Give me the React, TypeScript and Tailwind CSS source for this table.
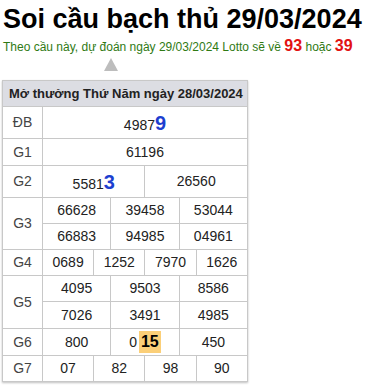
import React from "react";

const cell = "border border-[#c8c8c8] text-center text-[14px] text-[#222]";
const label = "border border-[#c8c8c8] text-center text-[14px] text-[#444]";

function Big({ children }: { children: React.ReactNode }) {
  return <span className="text-[20px] font-bold text-[#1d3fd0]">{children}</span>;
}

export default function App() {
  return (
    <div className="w-[370px] h-[387px] bg-white font-['Liberation_Sans',Arial,sans-serif]">
      <h1 className="pl-[3px] pt-[3px] text-[27px] leading-[32px] font-bold text-black">
        Soi cầu bạch thủ 29/03/2024
      </h1>
      <p className="pl-[3px] mt-[3px] text-[12px] leading-[16px] text-[#2f7a14]">
        Theo cầu này, dự đoán ngày 29/03/2024 Lotto sẽ về{" "}
        <span className="text-[16px] font-bold text-[#e21212]">93</span> hoặc{" "}
        <span className="text-[16px] font-bold text-[#e21212]">39</span>
      </p>
      <div className="pl-[104px] pt-[3px] h-[25px]">
        <svg width="14" height="13" viewBox="0 0 14 13">
          <polygon points="7,0 14,13 0,13" fill="#bdbdbd" />
        </svg>
      </div>
      <div className="ml-[2px] w-[246px] shadow-[0_1px_2px_rgba(0,0,0,0.25)]">
        <table className="w-[246px] table-fixed border-collapse">
          <colgroup>
            <col className="w-[40px]" />
            {Array.from({ length: 12 }).map((_, i) => (
              <col key={i} />
            ))}
          </colgroup>
          <tbody>
            <tr className="h-[26px] bg-[#dcdde3]">
              <td colSpan={13} className="border border-[#c8c8c8] pl-[6px] text-left text-[13px] font-bold text-[#222]">
                Mở thưởng Thứ Năm ngày 28/03/2024
              </td>
            </tr>
            <tr className="h-[32px]">
              <td className={label}>ĐB</td>
              <td colSpan={12} className={cell}>
                4987<Big>9</Big>
              </td>
            </tr>
            <tr className="h-[27px]">
              <td className={label}>G1</td>
              <td colSpan={12} className={cell}>61196</td>
            </tr>
            <tr className="h-[32px]">
              <td className={label}>G2</td>
              <td colSpan={6} className={cell}>
                5581<Big>3</Big>
              </td>
              <td colSpan={6} className={cell}>26560</td>
            </tr>
            <tr className="h-[26px]">
              <td rowSpan={2} className={label}>G3</td>
              <td colSpan={4} className={cell}>66628</td>
              <td colSpan={4} className={cell}>39458</td>
              <td colSpan={4} className={cell}>53044</td>
            </tr>
            <tr className="h-[26px]">
              <td colSpan={4} className={cell}>66883</td>
              <td colSpan={4} className={cell}>94985</td>
              <td colSpan={4} className={cell}>04961</td>
            </tr>
            <tr className="h-[26px]">
              <td className={label}>G4</td>
              <td colSpan={3} className={cell}>0689</td>
              <td colSpan={3} className={cell}>1252</td>
              <td colSpan={3} className={cell}>7970</td>
              <td colSpan={3} className={cell}>1626</td>
            </tr>
            <tr className="h-[26px]">
              <td rowSpan={2} className={label}>G5</td>
              <td colSpan={4} className={cell}>4095</td>
              <td colSpan={4} className={cell}>9503</td>
              <td colSpan={4} className={cell}>8586</td>
            </tr>
            <tr className="h-[27px]">
              <td colSpan={4} className={cell}>7026</td>
              <td colSpan={4} className={cell}>3491</td>
              <td colSpan={4} className={cell}>4985</td>
            </tr>
            <tr className="h-[27px]">
              <td className={label}>G6</td>
              <td colSpan={4} className={cell}>800</td>
              <td colSpan={4} className={cell}>
                0
                <span className="ml-[2px] inline-block bg-[#fbcf78] px-[2px] text-[16px] leading-[22px] font-bold text-black">
                  15
                </span>
              </td>
              <td colSpan={4} className={cell}>450</td>
            </tr>
            <tr className="h-[26px]">
              <td className={label}>G7</td>
              <td colSpan={3} className={cell}>07</td>
              <td colSpan={3} className={cell}>82</td>
              <td colSpan={3} className={cell}>98</td>
              <td colSpan={3} className={cell}>90</td>
            </tr>
          </tbody>
        </table>
      </div>
    </div>
  );
}
